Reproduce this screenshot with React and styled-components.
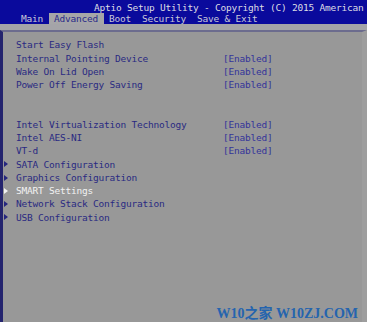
import React from "react";
import styled, { createGlobalStyle } from "styled-components";

const Global = createGlobalStyle`
  html, body { margin: 0; padding: 0; background: #989898; }
  #root { width: 367px; height: 322px; overflow: hidden; }
`;

const Screen = styled.div`
  position: relative;
  width: 367px;
  height: 322px;
  display: flex;
  flex-direction: column;
  background: #989898;
  font-family: "DejaVu Sans Mono", "Liberation Mono", monospace;
  font-size: 9.5px;
  letter-spacing: -0.22px;
  white-space: pre;
  overflow: hidden;
`;

const Header = styled.div`
  background: #0a0a9c;
  height: 24px;
  display: flex;
  flex-direction: column;
`;

const Title = styled.div`
  height: 13px;
  line-height: 15px;
  padding-left: 94px;
  color: #dcdce4;
`;

const Tabs = styled.div`
  height: 11px;
  display: flex;
  padding-left: 15.5px;
`;

const Tab = styled.div`
  padding: 0 5.5px;
  line-height: 11px;
  color: ${(p) => (p.$active ? "#2a2a88" : "#c8c8d8")};
  background: ${(p) => (p.$active ? "#a6a6a8" : "transparent")};
`;

const Strip = styled.div`
  height: 6px;
  background: #a4a4a8;
`;

const Panel = styled.div`
  flex: 1;
  display: flex;
  flex-direction: column;
  border-top: 2px solid #6c6c8e;
  border-left: 3px solid #24246e;
  border-right: 5px solid #9e9e9e;
  padding-top: 6.4px;
`;

const Row = styled.div`
  display: grid;
  grid-template-columns: 13px 207px 1fr;
  height: 13.25px;
  line-height: 13.25px;
  align-items: center;
  color: ${(p) => (p.$selected ? "#f2f2f2" : "#2a2a82")};
`;

const Arrow = styled.span`
  justify-self: start;
  margin-left: 1px;
  width: 0;
  height: 0;
  border-top: 3px solid transparent;
  border-bottom: 3px solid transparent;
  border-left: 4.5px solid ${(p) => (p.$selected ? "#f2f2f2" : "#26267e")};
`;

const Label = styled.span``;

const Value = styled.span`
  color: #34349a;
`;

const Watermark = styled.div`
  position: absolute;
  right: 9px;
  bottom: 0;
  font-family: "Liberation Serif", "Noto Sans CJK SC", serif;
  font-weight: bold;
  font-size: 14px;
  letter-spacing: 0;
  color: #2564ae;
`;

const rows = [
  { label: "Start Easy Flash" },
  { label: "Internal Pointing Device", value: "[Enabled]" },
  { label: "Wake On Lid Open", value: "[Enabled]" },
  { label: "Power Off Energy Saving", value: "[Enabled]" },
  { label: "" },
  { label: "" },
  { label: "Intel Virtualization Technology", value: "[Enabled]" },
  { label: "Intel AES-NI", value: "[Enabled]" },
  { label: "VT-d", value: "[Enabled]" },
  { label: "SATA Configuration", sub: true },
  { label: "Graphics Configuration", sub: true },
  { label: "SMART Settings", sub: true, selected: true },
  { label: "Network Stack Configuration", sub: true },
  { label: "USB Configuration", sub: true },
];

const tabs = ["Main", "Advanced", "Boot", "Security", "Save & Exit"];

export default function App() {
  return (
    <>
      <Global />
      <Screen>
        <Header>
          <Title>Aptio Setup Utility - Copyright (C) 2015 American</Title>
          <Tabs>
            {tabs.map((t) => (
              <Tab key={t} $active={t === "Advanced"}>{t}</Tab>
            ))}
          </Tabs>
        </Header>
        <Strip />
        <Panel>
          {rows.map((r, i) => (
            <Row key={i} $selected={r.selected}>
              {r.sub ? <Arrow $selected={r.selected} /> : <span />}
              <Label>{r.label}</Label>
              <Value>{r.value || ""}</Value>
            </Row>
          ))}
        </Panel>
        <Watermark>W10之家 W10ZJ.COM</Watermark>
      </Screen>
    </>
  );
}
